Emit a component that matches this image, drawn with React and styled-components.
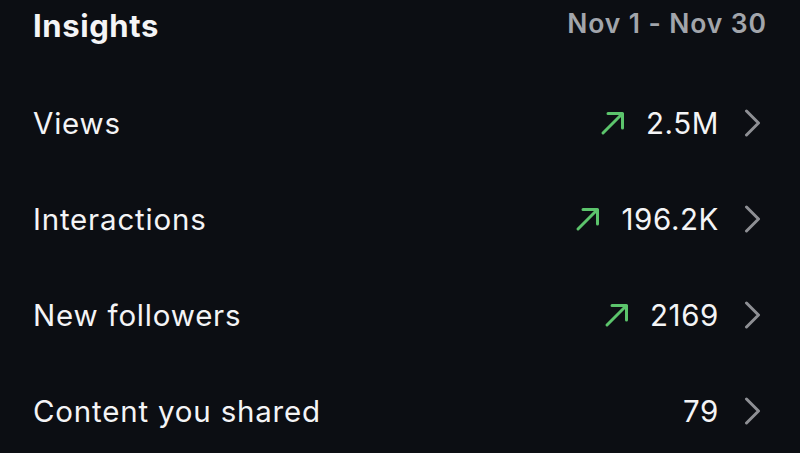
import React from "react";
import styled, { createGlobalStyle } from "styled-components";

const Global = createGlobalStyle`
  html, body { margin: 0; padding: 0; background: #0c0e13; }
  body { font-family: Inter, "Noto Sans", sans-serif; -webkit-font-smoothing: antialiased; }
`;

const Page = styled.div`
  width: 800px;
  height: 453px;
  box-sizing: border-box;
  padding: 0 34px 0 33px;
  background: #0c0e13;
  color: #f4f4f6;
  overflow: hidden;
`;

const Header = styled.header`
  height: 75px;
  display: flex;
  justify-content: space-between;
  align-items: flex-start;
`;

const Title = styled.h1`
  margin: 7px 0 0;
  font-size: 31px;
  line-height: 38px;
  font-weight: 700;
  letter-spacing: 0.6px;
`;

const Range = styled.div`
  margin-top: 6px;
  margin-right: -1px;
  font-size: 26.5px;
  line-height: 34px;
  font-weight: 600;
  letter-spacing: 0.9px;
  color: #a2a5ab;
`;

const Row = styled.div`
  height: 96px;
  display: flex;
  align-items: center;
  justify-content: space-between;
`;

const Label = styled.span`
  font-size: 29.5px;
  line-height: 36px;
  font-weight: 400;
  letter-spacing: 0.8px;
`;

const Right = styled.div`
  display: flex;
  align-items: center;
`;

const Trend = styled.svg`
  width: 26px;
  height: 26px;
  margin-right: 20px;
  flex: none;
`;

const Value = styled.span`
  font-size: 29.5px;
  line-height: 36px;
  font-weight: 400;
  letter-spacing: 0.6px;
`;

const Chevron = styled.svg`
  width: 20px;
  height: 28px;
  margin-left: 24px;
  margin-right: 3px;
  flex: none;
`;

const rows = [
  { label: "Views", value: "2.5M", up: true },
  { label: "Interactions", value: "196.2K", up: true },
  { label: "New followers", value: "2169", up: true },
  { label: "Content you shared", value: "79", up: false },
];

const UpArrow = () => (
  <Trend viewBox="0 0 26 26" fill="none">
    <path d="M3 23 L22.5 3.5 M8 3.5 H22.5 V18" stroke="#5cc46c" strokeWidth="3" strokeLinecap="round" strokeLinejoin="round" />
  </Trend>
);

const ChevronRight = () => (
  <Chevron viewBox="0 0 20 28" fill="none">
    <path d="M3.5 2 L15.5 14 L3.5 26" stroke="#8e8f94" strokeWidth="3" strokeLinecap="round" strokeLinejoin="round" />
  </Chevron>
);

export default function App() {
  return (
    <>
      <Global />
      <Page>
        <Header>
          <Title>Insights</Title>
          <Range>Nov 1 - Nov 30</Range>
        </Header>
        {rows.map((r) => (
          <Row key={r.label}>
            <Label>{r.label}</Label>
            <Right>
              {r.up && <UpArrow />}
              <Value>{r.value}</Value>
              <ChevronRight />
            </Right>
          </Row>
        ))}
      </Page>
    </>
  );
}
